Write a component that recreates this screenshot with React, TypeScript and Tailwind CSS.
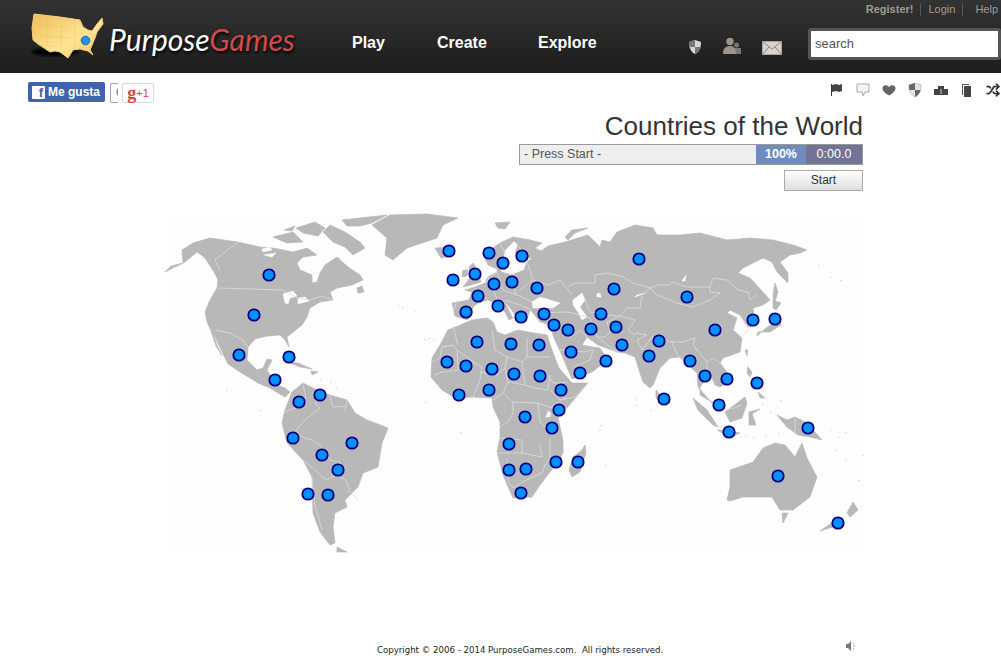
import { Shuffle } from "lucide-react";

const markers = [
  [269, 275], [254, 315], [239, 355], [289, 357], [275, 380], [299, 402], [320, 395], [293, 438], [352, 443],
  [322, 455], [338, 470], [308, 494], [328, 495], [449, 251], [489, 253], [503, 263], [522, 256], [475, 274],
  [453, 280], [494, 284], [512, 282], [478, 296], [537, 288], [498, 306], [466, 312], [521, 317], [544, 314],
  [554, 325], [568, 330], [591, 329], [616, 327], [601, 314], [614, 289], [639, 259], [687, 297], [715, 330],
  [753, 320], [775, 319], [477, 342], [511, 344], [539, 345], [571, 352], [622, 345], [606, 361], [580, 373],
  [659, 341], [649, 356], [690, 361], [705, 376], [727, 379], [757, 383], [719, 405], [664, 399], [729, 432],
  [808, 428], [778, 476], [838, 523], [447, 362], [466, 366], [492, 369], [514, 374], [540, 376], [561, 390],
  [489, 390], [459, 395], [559, 410], [525, 417], [552, 428], [509, 444], [556, 462], [578, 462], [509, 470],
  [526, 469], [521, 493],
];

// land shapes, in page pixels
const land = [
  // north and central america
  "M165,272 L171,266 L183,263 L182,250 L193,243 L210,238 L238,242 L260,247 L273,248 L293,252 L307,248 L317,255 L303,257 L297,263 L300,270 L312,275 L312,283 L317,282 L320,273 L325,265 L337,257 L348,267 L360,275 L363,280 L352,285 L337,288 L330,292 L333,300 L320,302 L310,308 L307,317 L302,325 L292,333 L287,337 L289,347 L285,340 L280,335 L267,336 L255,339 L248,347 L247,360 L257,370 L263,368 L267,359 L272,360 L267,370 L272,378 L277,385 L285,388 L290,392 L285,397 L278,393 L270,388 L258,383 L250,378 L240,372 L228,364 L222,352 L213,332 L217,345 L222,356 L216,346 L211,331 L207,322 L205,312 L210,300 L217,288 L218,280 L214,272 L205,258 L197,252 L185,262 Z",
  // greenland and arctic islands
  "M372,225 L390,215 L427,214 L458,218 L443,225 L437,238 L407,248 L393,260 L385,255 L387,238 Z",
  "M330,225 L345,232 L360,242 L365,248 L353,255 L345,247 L333,242 L323,232 Z",
  "M342,220 L387,215 L372,223 L360,226 L347,226 Z",
  "M273,237 L293,232 L303,242 L287,243 Z",
  "M296,228 L315,222 L325,228 L318,236 L303,233 Z",
  "M284,230 L295,226 L292,231 Z",
  "M357,288 L362,286 L364,292 L358,293 Z",
  // south america
  "M292,392 L303,383 L317,390 L330,395 L347,400 L355,413 L367,420 L388,428 L382,443 L378,467 L363,473 L358,487 L345,500 L347,507 L335,513 L333,527 L335,543 L330,545 L320,532 L313,513 L312,477 L303,460 L287,443 L282,423 L285,410 Z",
  "M337,547 L347,552 L337,552 Z",
  // africa
  "M458,326 L472,320 L487,318 L493,322 L497,332 L505,335 L518,330 L528,332 L547,335 L552,350 L559,368 L572,383 L588,383 L572,402 L558,418 L563,440 L563,453 L553,468 L540,485 L532,497 L513,498 L503,475 L497,452 L500,438 L500,422 L493,407 L492,398 L472,397 L455,398 L442,390 L431,377 L432,358 L440,345 L448,330 Z",
  "M585,445 L586,453 L580,472 L572,477 L569,470 L573,457 L582,450 Z",
  // eurasia
  "M452,303 L469,300 L472,292 L465,290 L475,287 L485,283 L488,277 L497,272 L498,265 L501,272 L512,275 L524,270 L527,262 L533,258 L523,258 L515,254 L518,244 L514,241 L505,250 L503,258 L505,270 L495,268 L488,265 L484,257 L490,250 L500,243 L513,237 L530,240 L542,243 L535,248 L541,251 L548,246 L565,242 L588,235 L600,247 L602,240 L610,242 L617,232 L635,225 L653,228 L657,235 L680,235 L700,233 L727,240 L750,238 L773,240 L793,245 L807,250 L800,253 L790,255 L780,262 L788,273 L788,283 L777,272 L772,262 L763,258 L743,268 L738,273 L750,278 L763,292 L770,300 L763,305 L753,308 L755,325 L748,327 L740,315 L730,310 L727,313 L737,318 L733,330 L742,338 L740,352 L723,358 L720,363 L733,380 L720,387 L715,385 L710,373 L700,387 L700,395 L712,402 L720,410 L712,403 L698,387 L697,373 L688,365 L680,357 L670,358 L660,368 L653,385 L650,388 L643,382 L640,373 L635,357 L625,353 L617,352 L598,345 L587,337 L582,345 L593,347 L600,348 L608,360 L592,372 L572,379 L566,365 L560,351 L554,338 L550,325 L540,322 L533,313 L530,310 L526,322 L519,322 L513,312 L504,300 L510,313 L513,318 L509,320 L505,312 L495,303 L488,300 L478,303 L473,307 L472,315 L467,320 L455,316 Z",
  // british isles, iceland, svalbard
  "M469,267 L473,263 L478,271 L481,282 L471,285 L463,287 L470,278 Z",
  "M463,270 L468,270 L467,276 L462,277 Z",
  "M435,248 L450,247 L454,255 L441,258 Z",
  "M495,223 L510,222 L505,229 L498,228 Z",
  "M565,237 L572,230 L588,228 L575,233 L568,240 Z",
  // japan and neighbours
  "M773,300 L781,303 L776,310 L773,308 Z",
  "M778,315 L781,325 L770,332 L758,332 L757,336 L766,328 L775,322 Z",
  "M775,283 L778,292 L774,305 L773,294 Z",
  "M745,350 L748,350 L747,356 Z",
  // sri lanka and the archipelago
  "M656,390 L660,395 L659,399 L656,398 Z",
  "M693,398 L707,410 L718,427 L713,425 L698,410 Z",
  "M717,430 L730,431 L740,433 L730,437 Z",
  "M725,412 L737,403 L745,397 L747,403 L742,418 L730,422 Z",
  "M749,412 L760,409 L752,414 L756,425 L749,425 Z",
  "M748,367 L752,372 L750,377 L747,373 Z",
  "M758,392 L765,398 L760,398 Z",
  "M777,415 L787,420 L795,417 L807,423 L822,440 L810,437 L798,435 L787,427 Z",
  // australia and new zealand
  "M727,500 L730,487 L730,470 L753,462 L763,448 L775,443 L785,445 L795,457 L802,443 L807,458 L817,477 L810,497 L793,510 L780,510 L772,497 L743,497 L730,501 Z",
  "M782,513 L788,513 L783,523 Z",
  "M847,513 L853,502 L858,510 L850,517 Z",
  "M820,531 L833,522 L843,518 L833,527 Z",
  // caribbean
  "M288,362 L298,363 L312,369 L300,367 Z",
  "M311,371 L318,372 L312,375 Z",
];

// water on top of the land
const water = [
  "M532,302 L540,297 L560,303 L553,308 L533,308 Z",
  "M573,300 L582,293 L585,300 L580,307 L587,317 L582,320 L578,312 L573,305 Z",
  "M283,294 L293,291 L297,296 L290,298 L288,304 L285,303 Z",
  "M298,298 L305,297 L309,301 L298,304 Z",
  "M337,293 L345,289 L350,291 L342,296 Z",
  "M262,249 L270,247 L272,250 L263,252 Z",
  "M264,255 L276,253 L272,257 Z",
  "M597,294 L600,293 L601,297 L597,297 Z",
  "M548,411 L551,413 L550,417 L546,417 Z",
  "M635,297 L645,293 L637,295 Z",
  "M682,281 L686,275 L685,281 Z",
];

// tiny specks of island
const specks = [
  [415, 311], [402, 307], [398, 305], [433, 340], [428, 338], [424, 339], [320, 379], [330, 382], [336, 388],
  [226, 390], [260, 410], [425, 402], [460, 432], [650, 410], [635, 398], [636, 405], [600, 425], [599, 430],
  [858, 480], [862, 455], [845, 460], [835, 450], [845, 432], [780, 400], [762, 404], [770, 412], [745, 435],
  [753, 437], [765, 435], [778, 433], [830, 430], [838, 437], [818, 265], [830, 277], [840, 280], [605, 465],
];

// borders, in page pixels
const borders = [
  "M238,242 L215,260 L220,270",
  "M219,288 L283,290 L297,298 L310,300 L322,296 L333,300",
  "M215,330 L230,333 L243,340 L248,347",
  "M272,378 L272,385",
  "M303,385 L306,397 L296,408 L285,412",
  "M317,390 L316,404 L320,408 L305,420 L296,430",
  "M330,395 L333,407 L347,406",
  "M347,400 L345,411",
  "M296,430 L302,437 L312,440 L320,445 L330,460 L340,462 L337,475",
  "M303,460 L315,470 L326,480 L337,475 L346,480 L350,490",
  "M312,477 L315,505 L322,530",
  "M347,490 L358,500",
  "M458,345 L453,326",
  "M442,347 L453,345 L457,350 L475,363 L482,367 L480,380 L473,397",
  "M432,362 L440,358 L442,347",
  "M457,350 L458,370 L442,372 L435,375",
  "M492,330 L495,350 L507,357 L522,362 L527,357 L527,338",
  "M527,357 L550,357",
  "M507,357 L505,368 L497,375 L480,372",
  "M505,368 L508,382 L503,393 L493,400",
  "M522,362 L525,385 L535,388 L548,390 L550,375",
  "M508,382 L525,385",
  "M503,393 L513,402 L538,403 L553,408",
  "M513,402 L513,413 L508,422 L500,427",
  "M538,403 L540,422 L550,432",
  "M550,408 L566,397",
  "M500,438 L522,440 L522,453 L542,457 L540,445",
  "M497,453 L522,453",
  "M507,458 L508,482 L513,488 L522,482 L542,473 L545,465 L550,458 L550,438",
  "M550,390 L560,400 L575,397 L588,383",
  "M548,375 L553,383 L568,382",
  "M453,312 L457,300",
  "M485,283 L497,272",
  "M488,277 L495,295 L498,300",
  "M475,288 L488,300",
  "M497,272 L503,290 L520,296 L532,302",
  "M512,276 L516,296",
  "M527,262 L533,280 L520,290",
  "M533,280 L548,285 L560,280 L572,295",
  "M514,241 L530,260",
  "M500,243 L506,255",
  "M505,300 L520,305 L532,310",
  "M538,313 L566,312 L573,313",
  "M568,287 L575,283 L595,283 L595,275 L608,273 L623,277 L633,283 L650,288",
  "M650,288 L658,285 L670,285 L672,282 L687,287 L710,287 L713,278 L727,280 L738,290 L748,292 L750,300 L757,295",
  "M650,288 L657,295 L677,303 L693,307 L710,300 L720,293 L710,292 L710,287",
  "M650,288 L642,295 L640,308 L627,308 L620,316 L635,320",
  "M585,300 L590,312 L605,315 L620,316",
  "M573,313 L590,318 L593,325 L597,337 L605,337 L610,332 L607,322 L620,316",
  "M597,337 L617,352",
  "M635,320 L628,330 L635,335 L637,333 L647,335 L637,340 L642,350 L652,337 L672,342 L683,342 L695,338 L693,345 L697,350",
  "M672,342 L677,355 L688,365",
  "M693,345 L707,362 L713,358 L720,363",
  "M707,362 L707,373 L713,380",
  "M569,338 L580,330 L587,337",
  "M560,350 L585,352 L593,350",
  "M573,367 L590,360 L593,350",
  "M741,338 L752,325",
  "M795,418 L795,435",
  "M728,410 L742,405",
];

const stateLines = "M36,25 L66,27 M40,36 L72,38 M48,16 L47,47 M62,18 L61,50 M75,24 L75,48 M36,45 L58,47 M85,25 L83,52";

function GameMap() {
  return (
    <svg viewBox="165 213 700 342" className="block h-[342px] w-[700px] bg-[#fefefe]">
      {land.map((d) => (
        <path key={d} d={d} fill="#b8b8b8" stroke="#b8b8b8" strokeWidth="0.7" strokeLinejoin="round" />
      ))}
      {water.map((d) => (
        <path key={d} d={d} fill="#fefefe" stroke="#fefefe" strokeWidth="0.5" strokeLinejoin="round" />
      ))}
      {specks.map(([x, y]) => (
        <rect key={`${x}-${y}`} x={x} y={y} width="1.5" height="1" fill="#d4d4d4" />
      ))}
      {borders.map((d) => (
        <path key={d} d={d} fill="none" stroke="#dcdcdc" strokeWidth="0.8" />
      ))}
      {markers.map(([x, y]) => (
        <circle key={`${x}-${y}`} cx={x} cy={y} r="5.7" fill="#0090ff" stroke="#000080" strokeWidth="1.8" />
      ))}
    </svg>
  );
}

function Logo() {
  return (
    <div className="flex pl-[30px]">
      <svg width="76" height="62" viewBox="30 10 76 62" className="mt-[10px] shrink-0">
        <defs>
          <linearGradient id="usa" x1="0" y1="0" x2="1" y2="1">
            <stop offset="0" stopColor="#efbe58" />
            <stop offset="0.6" stopColor="#ffe596" />
            <stop offset="1" stopColor="#f0c060" />
          </linearGradient>
          <filter id="soft">
            <feGaussianBlur stdDeviation="1.5" />
          </filter>
        </defs>
        <ellipse cx="55" cy="52" rx="24" ry="4" fill="#000" filter="url(#soft)" />
        <path
          d="M34,14 L60,17 L80,20 L83,27 L88,30 L92,31 L97,24 L102,18 L103,24 L97,32 L95,38 L90,50 L93,55 L88,51 L80,49 L73,50 L68,58 L60,52 L55,51 L50,52 L38,44 L33,40 L32,28 Z"
          fill="url(#usa)"
          stroke="#f4ce74"
          strokeWidth="1"
          strokeLinejoin="round"
        />
        <path d={stateLines} stroke="#d8aa50" strokeWidth="0.4" opacity="0.5" fill="none" />
        <circle cx="85.5" cy="40.5" r="4.3" fill="#2a8ef0" stroke="#15508a" strokeWidth="0.8" />
      </svg>
      <div className="mt-[21px] ml-[3px] font-['Lato',sans-serif] text-[30px] leading-[36px] whitespace-nowrap italic [text-shadow:1px_2px_3px_#000]">
        <span className="text-white">Purpose</span>
        <span className="text-[#d04a4e]">Games</span>
      </div>
    </div>
  );
}

function Header() {
  return (
    <header className="flex h-[73px] bg-gradient-to-b from-[#333333] to-[#1d1d1d] font-['Liberation_Sans',Arial,sans-serif]">
      <div className="w-[352px] shrink-0">
        <Logo />
      </div>
      <nav className="flex pt-[34px] text-[16px] leading-[18px] font-bold text-white">
        <a className="w-[85px]">Play</a>
        <a className="w-[101px]">Create</a>
        <a>Explore</a>
      </nav>
      <div className="ml-auto flex w-[340px] flex-col">
        <div className="flex h-[19px] items-center justify-end pr-[3px] text-[11px] text-[#a09c90]">
          <a className="font-bold">Register!</a>
          <span className="mx-[7px] h-[13px] w-px bg-[#555]" />
          <a>Login</a>
          <span className="mx-[7px] h-[13px] w-px bg-[#555]" />
          <a className="ml-[5px]">Help</a>
        </div>
        <div className="mt-[9px] flex items-start pl-[26px]">
          <svg width="16" height="16" viewBox="0 0 16 16" className="mt-[11px]">
            <path d="M8,1 L14,3 C14,9 12,13 8,15 C4,13 2,9 2,3 Z" fill="#d8d8d8" />
            <path d="M8,1 L8,8 L2.4,8 C2,6 2,4 2,3 Z M8,8 L13.6,8 C13,11 11,13.5 8,15 Z" fill="#777" />
          </svg>
          <svg width="18" height="18" viewBox="0 0 18 18" className="mt-[9px] ml-[20px]">
            <circle cx="7" cy="4.5" r="3.7" fill="#9c9488" />
            <circle cx="13.5" cy="8" r="2.5" fill="#7c766c" />
            <path d="M11,11 L18,11 L18,17 L11,17 Z" fill="#7c766c" />
            <path d="M0,17 C0,11 3,9 7,9 C11,9 13,11 13,17 Z" fill="#9c9488" />
          </svg>
          <svg width="20" height="14" viewBox="0 0 20 14" className="mt-[13px] ml-[21px]">
            <rect x="0.5" y="0.5" width="19" height="13" fill="#d8d4cc" stroke="#a8a49c" />
            <path d="M1,1 L10,8 L19,1 M1,13 L7,6 M19,13 L13,6" fill="none" stroke="#8c8880" />
          </svg>
          <div className="ml-[26px] h-[32px] flex-1 rounded-[3px] border-[3px] border-[#555555]">
            <input
              defaultValue="search"
              className="block h-full w-full bg-white pb-[2px] pl-[4px] text-[13px] text-[#555] outline-none"
            />
          </div>
        </div>
      </div>
    </header>
  );
}

function SocialRow() {
  return (
    <div className="flex h-[38px] items-start justify-between font-['Liberation_Sans',Arial,sans-serif]">
      <div className="flex pt-[9px] pl-[28px]">
        <div className="flex h-[20px] w-[77px] items-center rounded-[2px] bg-[#4064ac] pl-[4px]">
          <span className="flex h-[13px] w-[13px] items-end justify-end rounded-[1px] bg-white pr-[2px] text-[13px] leading-[13px] font-bold text-[#4064ac]">
            f
          </span>
          <span className="ml-[3px] text-[12px] font-bold whitespace-nowrap text-white">Me gusta</span>
        </div>
        <div className="relative mt-px ml-[5px] h-[20px] w-[8px] overflow-hidden rounded-l-[2px] border-y border-l border-[#9aa4bc] pl-[5px] text-[10px] leading-[18px] text-[#4064ac]">
          6
        </div>
        <div className="mt-px ml-[4px] flex h-[20px] w-[32px] items-center justify-center rounded-[2px] border border-[#d8d8d8] text-[#d8453a]">
          <span className="font-['Liberation_Serif',serif] text-[18px] leading-[14px] font-bold">g</span>
          <span className="text-[11px] leading-[14px]">+1</span>
        </div>
      </div>
      <div className="flex gap-[10px] pt-[10px]">
        <svg width="16" height="14" viewBox="0 0 16 14">
          <rect x="2" y="1" width="1" height="12" fill="#333" />
          <path d="M3,2 L7,1 L10,2 L13,1 L13,8 L10,9 L7,8 L3,9 Z" fill="#444" />
        </svg>
        <svg width="16" height="14" viewBox="0 0 16 14">
          <path d="M2,1 L14,1 L14,9 L10,9 L8,13 L7,9 L2,9 Z" fill="#f4f4f4" stroke="#aaa" />
        </svg>
        <svg width="16" height="14" viewBox="0 0 16 14">
          <path d="M8,12.5 C2,9 1.5,7 1.5,5 C1.5,2 6,1 8,4 C10,1 14.5,2 14.5,5 C14.5,7 14,9 8,12.5 Z" fill="#666" />
        </svg>
        <svg width="16" height="14" viewBox="0 0 16 14">
          <path d="M8,0 L14,2 C14,8 12,12 8,14 C4,12 2,8 2,2 Z" fill="#e4e4e4" stroke="#999" strokeWidth="0.5" />
          <path d="M8,0 L8,7 L2.4,7 C2,5 2,3 2,2 Z M8,7 L13.6,7 C13,10 11,12.5 8,14 Z" fill="#666" />
        </svg>
        <svg width="16" height="14" viewBox="0 0 16 14">
          <path d="M1,6 L5,6 L5,3 L11,3 L11,6 L15,6 L15,12 L1,12 Z" fill="#444" />
          <path d="M7.5,6 L8.5,6 L8.5,11 L7.5,11 Z" fill="#ccc" />
        </svg>
        <svg width="16" height="14" viewBox="0 0 16 14">
          <path d="M3,1 L10,1 L10,2 L4,2 L4,12 L3,12 Z" fill="#555" />
          <rect x="5" y="3" width="7" height="11" fill="#444" />
        </svg>
        <Shuffle size={14} strokeWidth={3} className="mr-[1px] ml-px text-[#333]" />
      </div>
    </div>
  );
}

export default function App() {
  return (
    <div className="h-[660px] overflow-hidden bg-white font-['Liberation_Sans',Arial,sans-serif]">
      <Header />
      <SocialRow />

      {/* game title and status bar */}
      <div className="flex w-[863px] flex-col items-end">
        <h1 className="h-[33px] text-[26px] leading-[30px] text-[#333]">Countries of the World</h1>
        <div className="flex h-[21px] w-[344px] border border-[#999] bg-[#eeeeee] text-[12.5px] leading-[19px]">
          <div className="flex-1 pl-[4px] text-[#555]">- Press Start -</div>
          <div className="w-[50px] bg-[#6f8cc0] text-center font-bold text-white">100%</div>
          <div className="w-[56px] bg-[#737396] text-center text-white">0:00.0</div>
        </div>
        <button className="mt-[5px] h-[21px] w-[79px] border border-[#aaa] bg-gradient-to-b from-white to-[#dddddd] text-[12px] leading-[19px] text-[#333]">
          Start
        </button>
      </div>

      <div className="mt-[22px] ml-[165px]">
        <GameMap />
      </div>

      <footer className="mt-[89px] flex pl-[377px]">
        <div className="w-[468px] font-['DejaVu_Sans',sans-serif] text-[8.6px] leading-[12px] whitespace-pre text-[#222]">
          Copyright © 2006 - 2014 PurposeGames.com.  All rights reserved.
        </div>
        <svg width="12" height="12" viewBox="0 0 12 12" className="-mt-[4px]">
          <path d="M1,4 L3,4 L6,1 L6,11 L3,8 L1,8 Z" fill="#777" />
          <path d="M8,3 L9,4 M8,6 L10,6 M8,9 L9,8" stroke="#999" fill="none" />
        </svg>
      </footer>
    </div>
  );
}
